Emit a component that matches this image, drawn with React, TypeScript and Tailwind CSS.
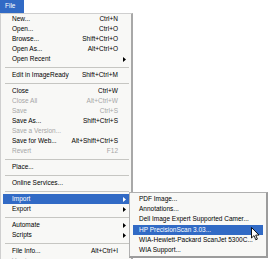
import React from 'react';

type Item =
  | { sep: true }
  | { label: string; shortcut?: string; sub?: boolean; disabled?: boolean; active?: boolean; sep?: false };

const fileMenu: Item[] = [
  { label: 'New...', shortcut: 'Ctrl+N' },
  { label: 'Open...', shortcut: 'Ctrl+O' },
  { label: 'Browse...', shortcut: 'Shift+Ctrl+O' },
  { label: 'Open As...', shortcut: 'Alt+Ctrl+O' },
  { label: 'Open Recent', sub: true },
  { sep: true },
  { label: 'Edit in ImageReady', shortcut: 'Shift+Ctrl+M' },
  { sep: true },
  { label: 'Close', shortcut: 'Ctrl+W' },
  { label: 'Close All', shortcut: 'Alt+Ctrl+W', disabled: true },
  { label: 'Save', shortcut: 'Ctrl+S', disabled: true },
  { label: 'Save As...', shortcut: 'Shift+Ctrl+S' },
  { label: 'Save a Version...', disabled: true },
  { label: 'Save for Web...', shortcut: 'Alt+Shift+Ctrl+S' },
  { label: 'Revert', shortcut: 'F12', disabled: true },
  { sep: true },
  { label: 'Place...' },
  { sep: true },
  { label: 'Online Services...' },
  { sep: true },
  { label: 'Import', sub: true, active: true },
  { label: 'Export', sub: true },
  { sep: true },
  { label: 'Automate', sub: true },
  { label: 'Scripts', sub: true },
  { sep: true },
  { label: 'File Info...', shortcut: 'Alt+Ctrl+I' },
  { label: 'Versions...', disabled: true },
];

const importMenu = [
  'PDF Image...',
  'Annotations...',
  'Dell Image Expert Supported Camer...',
  'HP PrecisionScan 3.03...',
  'WIA-Hewlett-Packard ScanJet 5300C...',
  'WIA Support...',
];

function Arrow({ white }: { white?: boolean }) {
  return (
    <svg width="3" height="5" viewBox="0 0 3 5" className="block">
      <polygon points="0,0 3,2.5 0,5" fill={white ? '#ffffff' : '#000000'} />
    </svg>
  );
}

export default function App() {
  return (
    <div
      className="relative w-[270px] h-[259px] overflow-hidden bg-white text-[6.5px] leading-none text-black"
      style={{ fontFamily: '"Liberation Sans", Arial, sans-serif' }}
    >
      {/* menu bar tab */}
      <div className="h-[13px] w-[24px] bg-[#316ac5] text-white flex items-center pl-[5px]">File</div>

      {/* File menu */}
      <div className="w-[133px] bg-[#f8f8f6] border-l border-t border-[#cfcfcf] border-r-[2px] border-r-[#a8a8a8] px-[2px]">
        {fileMenu.map((it, i) =>
          it.sep ? (
            <div key={i} className="h-[6px] flex items-center pl-[2px]">
              <div className="h-px w-full bg-[#c6c6c2]" />
            </div>
          ) : (
            <div
              key={i}
              className={`h-[10px] flex items-center pl-[9px] ${
                it.active ? 'bg-[#316ac5] text-white' : it.disabled ? 'text-[#a6a6a6]' : ''
              }`}
            >
              <span className="flex-1 whitespace-nowrap">{it.label}</span>
              {it.shortcut && <span className="whitespace-nowrap">{it.shortcut}</span>}
              <span className="w-[11px] flex justify-end pr-[3px]">{it.sub && <Arrow white={it.active} />}</span>
            </div>
          )
        )}
      </div>

      {/* Import submenu */}
      <div className="absolute left-[129px] top-[192px] w-[139px] bg-[#f8f8f6] border border-[#b0b0b0] border-r-[2px] border-b-[2px] border-r-[#9c9c9c] border-b-[#9c9c9c] px-[3px] pt-[1px]">
        {importMenu.map((label, i) => (
          <div
            key={i}
            className={`h-[10.3px] flex items-center pl-[6px] whitespace-nowrap ${
              i === 3 ? 'bg-[#316ac5] text-white' : ''
            }`}
          >
            {label}
          </div>
        ))}
      </div>

      {/* mouse pointer */}
      <svg className="absolute left-[251px] top-[227px]" width="9" height="14" viewBox="0 0 9 14">
        <polygon
          points="0.5,0.5 0.5,11 3,8.6 4.8,12.8 6.4,12.1 4.7,8.1 8,8.1"
          fill="#ffffff"
          stroke="#000000"
          strokeWidth="0.9"
          strokeLinejoin="round"
        />
      </svg>
    </div>
  );
}
